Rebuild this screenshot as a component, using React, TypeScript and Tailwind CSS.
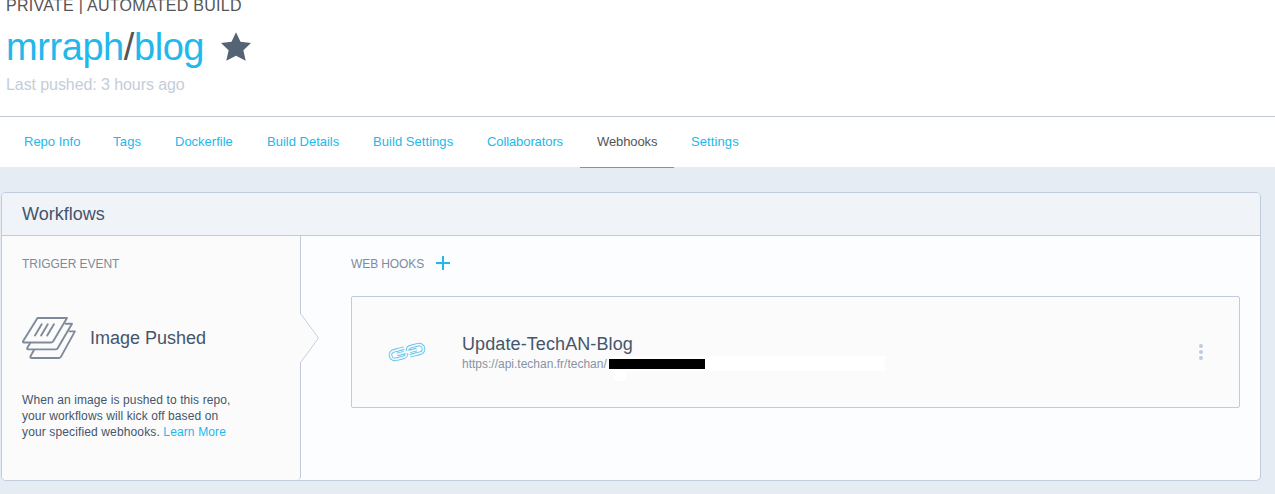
import React from "react";

const tabs = [
  { label: "Repo Info", width: "w-[89px]" },
  { label: "Tags", width: "w-[62px]", tracking: "tracking-[0.2px]" },
  { label: "Dockerfile", width: "w-[92px]" },
  { label: "Build Details", width: "w-[106px]" },
  { label: "Build Settings", width: "w-[114px]", tracking: "tracking-[0.05px]" },
  { label: "Collaborators", width: "w-[110px]", tracking: "tracking-[-0.1px]" },
  { label: "Webhooks", width: "w-[94px]", tracking: "tracking-[-0.1px]", active: true },
  { label: "Settings", width: "w-[82px]", tracking: "tracking-[0.1px]" },
];

function StarIcon() {
  return (
    <svg width="30" height="29" viewBox="0 0 30 29" className="ml-[17px] mt-[32px] shrink-0" fill="#556475">
      <path d="M15 0.3L19.5 9.7L30 11L22.4 18.2L24.7 28.7L15 23.7L5.3 28.7L7.6 18.2L0 11L10.5 9.7Z" />
    </svg>
  );
}

function StackIcon() {
  return (
    <svg width="54" height="43" viewBox="0 0 54 43" className="shrink-0" fill="none" stroke="#7f8b9b" strokeWidth="1.9" strokeLinejoin="round" strokeLinecap="round">
      <path d="M15.5 1H45L31.2 24.2Q30.3 25.5 29 25.5H2Q0.3 25.5 1.2 24Z" />
      <path d="M43.5 6.7H50L35.8 31Q35 32.4 33.7 32.4H7Q4.5 32.4 5.3 30.8L8.2 26" />
      <path d="M47.5 14.4H52.9L39 39.6Q38.2 41 36.7 41H10Q7.7 41 8.5 39.3L12 33" />
      <path d="M19.7 7.3L13 18.5M25.8 7.3L19.1 18.5M31.9 7.3L25.2 18.5" />
    </svg>
  );
}

const leftLink = "M12.5 6.6H7.5a4.4 4.4 0 0 0 0 8.8H15a4.4 4.4 0 0 0 4.3-3.4M10 11H17";
const rightLink = "M27.5 15.4H32.5a4.4 4.4 0 0 0 0-8.8H25a4.4 4.4 0 0 0-4.3 3.4M23 11H30";
const bars = "M11 6.6H18M22 15.4H29";

function ChainIcon() {
  return (
    <svg width="40" height="22" viewBox="0 0 40 22" className="shrink-0" fill="none">
      <g transform="rotate(-14 20 11)">
        <g stroke="#62c1ea" strokeWidth="3.6">
          <path d={leftLink} />
          <path d={rightLink} />
          <path d={bars} />
        </g>
        <g stroke="#f1f9fc" strokeWidth="1.8">
          <path d={leftLink} />
          <path d={rightLink} />
          <path d={bars} />
        </g>
      </g>
    </svg>
  );
}

export default function App() {
  return (
    <div className="flex h-[494px] w-[1275px] flex-col overflow-hidden bg-[#e5ecf4] font-['Liberation_Sans',sans-serif] text-[#44566c]">
      <header className="h-[117px] shrink-0 overflow-hidden border-b border-[#c0c9d2] bg-white pl-[6px]">
        <p className="-mt-[4px] h-5 whitespace-nowrap text-[16px] leading-5 tracking-[0.28px] text-[#555]">PRIVATE | AUTOMATED BUILD</p>
        <div className="-mt-4 flex h-[58px]">
          <h1 className="mt-[24px] w-[198px] whitespace-nowrap text-[38px] leading-[46px] tracking-[-0.43px] text-[#22b8eb]">
            mrraph<span className="text-[#555]">/</span>blog
          </h1>
          <StarIcon />
        </div>
        <p className="mt-[17px] whitespace-nowrap text-[16px] leading-5 tracking-[-0.08px] text-[#c4cdda]">Last pushed: 3 hours ago</p>
      </header>
      <nav className="flex h-[51px] shrink-0 bg-[linear-gradient(#fff_50px,#e5ecf4_50px)] pl-[7px]">
        {tabs.map((tab) => (
          <a
            key={tab.label}
            className={`${tab.width} ${tab.tracking ?? ""} h-[51px] shrink-0 whitespace-nowrap pl-[17px] text-[13px] leading-[49px] ${
              tab.active ? "border-b border-[#22b8eb] text-[#555]" : "text-[#22b8eb]"
            }`}
          >
            {tab.label}
          </a>
        ))}
      </nav>
      <main className="pl-px pt-6">
        <section className="flex h-[289px] w-[1260px] flex-col rounded-[5px] border border-[#c0cbdb] bg-[#fcfdff]">
          <h2 className="h-[43px] shrink-0 rounded-t-[4px] border-b border-[#c0cbdb] bg-[#f0f3f8] pl-5 text-[18px] leading-[43px] text-[#44566c]">Workflows</h2>
          <div className="flex grow">
            <aside className="relative w-[299px] shrink-0 rounded-bl-[4px] rounded-br-[4px] border-r border-[#c0cbdb] bg-[#fbfbfb] pl-5">
              <h3 className="mt-[19px] text-[12px] leading-[18px] tracking-[-0.05px] text-[#7f8b9b]">TRIGGER EVENT</h3>
              <div className="mt-[44px] flex h-[43px] items-start">
                <StackIcon />
                <span className="ml-[14px] text-[18px] leading-[43px] text-[#44566c]">Image Pushed</span>
              </div>
              <p className="mt-[32px] whitespace-nowrap text-[12px] leading-4 tracking-[0.1px] text-[#44566c]">
                When an image is pushed to this repo,
                <br />
                your workflows will kick off based on
                <br />
                <span className="tracking-[0.13px]">
                  your specified webhooks. <a className="text-[#22b8eb]">Learn More</a>
                </span>
              </p>
              <svg width="20" height="50" viewBox="0 0 20 50" className="absolute -right-[20px] top-[77px]" fill="#fbfbfb">
                <path d="M0 1L1 1L18.5 25L1 49H0Z" />
                <path d="M0.8 0.8L18.5 25L0.8 49.2" fill="none" stroke="#c9cfe0" />
              </svg>
            </aside>
            <div className="grow pl-[50px]">
              <div className="mt-[18px] flex h-[20px] items-start">
                <h3 className="mt-px w-[85px] text-[12px] leading-[18px] tracking-[-0.1px] text-[#7f8b9b]">WEB HOOKS</h3>
                <svg width="14" height="14" viewBox="0 0 14 14" stroke="#22b8eb" strokeWidth="2" className="mt-[2px]">
                  <path d="M7 0V14M0 7H14" />
                </svg>
              </div>
              <article className="mt-[22px] flex h-[112px] w-[889px] rounded-[2px] border border-[#c0cbdb] bg-[#fbfbfb]">
                <div className="ml-[35px] mt-[44px] w-[75px]">
                  <ChainIcon />
                </div>
                <div className="grow">
                  <h4 className="mt-[36px] h-[22px] text-[18px] leading-[23px] tracking-[0.1px] text-[#44566c]">Update-TechAN-Blog</h4>
                  <div className="flex h-[18px] items-start">
                    <span className="w-[147px] whitespace-nowrap text-[12px] leading-[18px] text-[#8793a4]">https://api.techan.fr/techan/</span>
                    <div className="mt-px h-[15px] w-[276px] bg-white pt-[3px]">
                      <div className="h-[10px] w-[96px] bg-black" />
                    </div>
                  </div>
                  <div className="-mt-[2px] ml-[152px] h-[10px] w-3 bg-white" />
                </div>
                <div className="mr-[36px] mt-[47px] flex flex-col gap-[2px]">
                  <i className="size-1 rounded-full bg-[#c0cbdb]" />
                  <i className="size-1 rounded-full bg-[#c0cbdb]" />
                  <i className="size-1 rounded-full bg-[#c0cbdb]" />
                </div>
              </article>
            </div>
          </div>
        </section>
      </main>
    </div>
  );
}
